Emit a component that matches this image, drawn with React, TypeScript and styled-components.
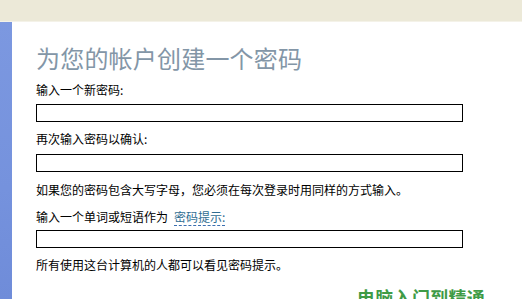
import React from "react";
import styled, { createGlobalStyle } from "styled-components";

const Global = createGlobalStyle`
  html, body { margin: 0; padding: 0; background: #ffffff; }
  body { width: 522px; height: 299px; overflow: hidden; }
  #root { width: 522px; height: 299px; }
`;

const Page = styled.div`
  position: relative;
  width: 522px;
  height: 299px;
  display: flex;
  flex-direction: column;
  background: #ffffff;
  font-family: "Noto Sans CJK SC", "Noto Sans", sans-serif;
  overflow: hidden;
`;

const TopBar = styled.div`
  height: 21px;
  flex: none;
  background: #ece9d8;
  border-bottom: 1px solid #f4f2e8;
`;

const Body = styled.div`
  flex: 1;
  display: flex;
`;

const SideStrip = styled.div`
  width: 12px;
  flex: none;
  background: linear-gradient(180deg, #7c98e0 0%, #7592dd 60%, #6f8cd9 100%);
`;

const Content = styled.div`
  flex: 1;
  display: flex;
  flex-direction: column;
  padding-left: 24px;
  padding-top: 22px;
`;

const Title = styled.h1`
  margin: 0;
  font-size: 24px;
  line-height: 28px;
  font-weight: 400;
  color: #8396a7;
  letter-spacing: 0.2px;
`;

const Line = styled.p<{ $mt: number }>`
  margin: ${(p) => p.$mt}px 0 0 0;
  font-size: 12px;
  line-height: 16px;
  color: #000000;
  white-space: nowrap;
`;

const HintLink = styled.span`
  margin-left: 6px;
  color: #2f6d92;
  border-bottom: 1px dashed #3b6fb0;
  padding-bottom: 0px;
`;

const Field = styled.div<{ $mt: number }>`
  margin-top: ${(p) => p.$mt}px;
  width: 425px;
  height: 16px;
  border: 1px solid #000000;
  background: #ffffff;
`;

const Watermark = styled.div`
  position: absolute;
  left: 357px;
  top: 286px;
  font-size: 18px;
  line-height: 22px;
  font-weight: 700;
  color: #3f9b46;
  letter-spacing: 0.3px;
  white-space: nowrap;
`;

export default function App() {
  return (
    <Page>
      <Global />
      <TopBar />
      <Body>
        <SideStrip />
        <Content>
          <Title>为您的帐户创建一个密码</Title>
          <Line $mt={10}>输入一个新密码:</Line>
          <Field $mt={6} />
          <Line $mt={9}>再次输入密码以确认:</Line>
          <Field $mt={7} />
          <Line $mt={10}>如果您的密码包含大写字母，您必须在每次登录时用同样的方式输入。</Line>
          <Line $mt={11}>
            输入一个单词或短语作为<HintLink>密码提示:</HintLink>
          </Line>
          <Field $mt={5} />
          <Line $mt={9}>所有使用这台计算机的人都可以看见密码提示。</Line>
        </Content>
      </Body>
      <Watermark>电脑入门到精通</Watermark>
    </Page>
  );
}
